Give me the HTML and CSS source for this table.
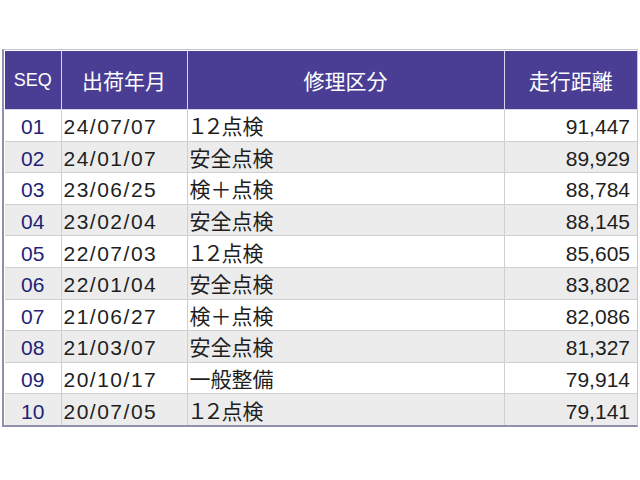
FILE: index.html
```html
<!DOCTYPE html>
<html lang="ja">
<head>
<meta charset="utf-8">
<link rel="stylesheet" href="styles.css">
</head>
<body>
<div class="frame">
<table class="grid">
<colgroup>
<col class="c-seq"><col class="c-date"><col class="c-kind"><col class="c-dist">
</colgroup>
<thead>
<tr><th class="h-seq">SEQ</th><th>出荷年月</th><th>修理区分</th><th>走行距離</th></tr>
</thead>
<tbody>
<tr><td class="seq">01</td><td class="date">24/07/07</td><td class="kind">１２点検</td><td class="dist">91,447</td></tr>
<tr><td class="seq">02</td><td class="date">24/01/07</td><td class="kind">安全点検</td><td class="dist">89,929</td></tr>
<tr><td class="seq">03</td><td class="date">23/06/25</td><td class="kind">検＋点検</td><td class="dist">88,784</td></tr>
<tr><td class="seq">04</td><td class="date">23/02/04</td><td class="kind">安全点検</td><td class="dist">88,145</td></tr>
<tr><td class="seq">05</td><td class="date">22/07/03</td><td class="kind">１２点検</td><td class="dist">85,605</td></tr>
<tr><td class="seq">06</td><td class="date">22/01/04</td><td class="kind">安全点検</td><td class="dist">83,802</td></tr>
<tr><td class="seq">07</td><td class="date">21/06/27</td><td class="kind">検＋点検</td><td class="dist">82,086</td></tr>
<tr><td class="seq">08</td><td class="date">21/03/07</td><td class="kind">安全点検</td><td class="dist">81,327</td></tr>
<tr><td class="seq">09</td><td class="date">20/10/17</td><td class="kind">一般整備</td><td class="dist">79,914</td></tr>
<tr><td class="seq">10</td><td class="date">20/07/05</td><td class="kind">１２点検</td><td class="dist">79,141</td></tr>
</tbody>
</table>
</div>
</body>
</html>
```
FILE: styles.css
```css
html, body {
  margin: 0;
  padding: 0;
  background: #ffffff;
}
body {
  font-family: "Liberation Sans", "Noto Sans CJK JP", sans-serif;
  padding: 49px 0 0 2px;
}
.frame {
  width: 636px;
  border-top: 1px solid #c4c4d6;
  border-left: 2px solid #8f8fb0;
  border-bottom: 2px solid #8f8fb0;
  border-right: 1px solid #c8c8c8;
  padding: 1px 1px 0 1px;
  box-sizing: border-box;
}
.grid {
  border-collapse: collapse;
  table-layout: fixed;
  width: 632px;
}
.c-seq { width: 56px; }
.c-date { width: 126px; }
.c-kind { width: 317px; }
.c-dist { width: 133px; }
.grid th {
  background: #493e93;
  color: #ffffff;
  font-weight: normal;
  font-size: 21px;
  height: 58px;
  padding: 0;
  border: 1px solid #d8d6ea;
  border-top: none;
  text-align: center;
}
.grid th:first-child { border-left: none; }
.grid th:last-child { border-right: none; }
.grid th.h-seq { font-size: 18px; }
.grid td {
  height: 27.6px;
  padding: 3px 0 0 0;
  font-size: 21px;
  color: #1e1e1e;
  border: 1px solid #cfcfcf;
  white-space: nowrap;
  line-height: 1;
}
.grid td:first-child { border-left: none; }
.grid td:last-child { border-right: none; }
.grid tbody tr:last-child td { border-bottom: none; }
.grid tbody tr:nth-child(even) td { background: #ececec; }
.grid td.seq {
  text-align: center;
  color: #1f1f78;
}
.grid td.date {
  padding-left: 2px;
  letter-spacing: 1.5px;
}
.grid td.kind {
  padding-left: 2px;
  font-feature-settings: "palt";
}
.grid td.dist {
  text-align: right;
  padding-right: 7px;
}
```
